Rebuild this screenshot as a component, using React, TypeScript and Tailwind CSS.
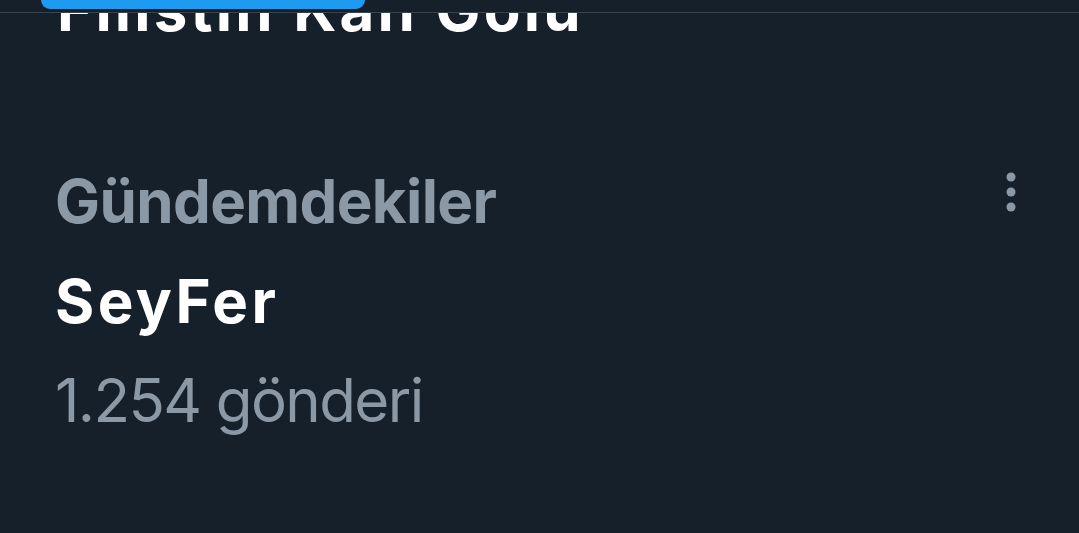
export default function App() {
  return (
    <div className="relative h-[533px] w-[1079px] overflow-hidden bg-[#15202b] font-['Inter',sans-serif]">
      <div className="absolute inset-x-0 top-0 z-10 h-[13px] border-b border-[#38444d] bg-[#15202b]">
        <div className="ml-[41px] h-[9px] w-[324px] rounded-b-full bg-[#1d9bf0]" />
      </div>

      <div className="pl-[55px] pr-[48px]">
        <div className="-mt-[41px] pl-[2px] text-[60px] font-bold leading-[100px] tracking-[3.2px] text-white">
          Filistin Kan Gölü
        </div>

        <div className="mt-[92px] flex items-start justify-between">
          <div className="flex flex-col">
            <span className="text-[60px] font-bold leading-[100px] tracking-[-0.6px] text-[#8b98a5]">
              Gündemdekiler
            </span>
            <span className="text-[60px] font-bold leading-[100px] tracking-[3.4px] text-white">
              SeyFer
            </span>
            <span className="-mt-px text-[60px] font-normal leading-[100px] tracking-[-1.6px] text-[#8b98a5]">
              1.254 gönderi
            </span>
          </div>
          <svg width="20" height="46" viewBox="0 0 20 46" className="mt-[19px] mr-[10px]" fill="#8b98a5">
            <circle cx="10" cy="7" r="4.5" />
            <circle cx="10" cy="22" r="4.5" />
            <circle cx="10" cy="37" r="4.5" />
          </svg>
        </div>
      </div>
    </div>
  );
}
